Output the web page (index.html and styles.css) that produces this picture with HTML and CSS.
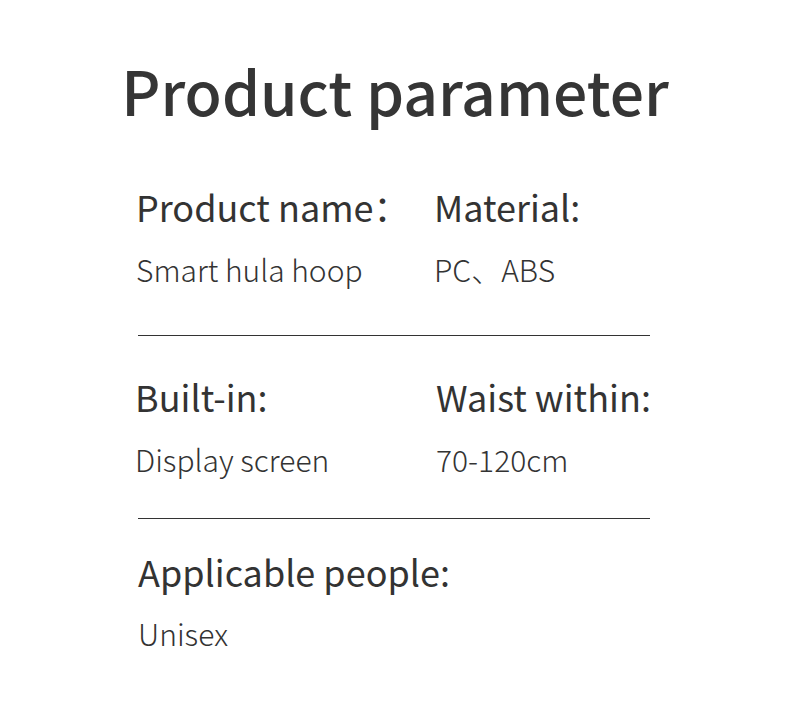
FILE: index.html
```html
<!DOCTYPE html>
<html>
<head>
<meta charset="utf-8">
<link rel="stylesheet" href="styles.css">
</head>
<body>
<main class="page">
  <h1 class="title">Product parameter</h1>
  <section class="specs">
    <div class="row row-1">
      <div class="cell cell-a1">
        <div class="label">Product name：</div>
        <div class="value">Smart hula hoop</div>
      </div>
      <div class="cell">
        <div class="label">Material:</div>
        <div class="value">PC、ABS</div>
      </div>
    </div>
    <hr class="rule">
    <div class="row row-2">
      <div class="cell cell-a2">
        <div class="label">Built-in:</div>
        <div class="value">Display screen</div>
      </div>
      <div class="cell cell-b2">
        <div class="label">Waist within:</div>
        <div class="value">70-120cm</div>
      </div>
    </div>
    <hr class="rule">
    <div class="row row-3">
      <div class="cell cell-wide">
        <div class="label">Applicable people:</div>
        <div class="value">Unisex</div>
      </div>
    </div>
  </section>
</main>
</body>
</html>
```
FILE: styles.css
```css
html, body {
  margin: 0;
  padding: 0;
  background: #ffffff;
}
body {
  font-family: "Noto Sans CJK SC", "Noto Sans", sans-serif;
  color: #333333;
  width: 790px;
  height: 707px;
  overflow: hidden;
}
.page {
  display: flex;
  flex-direction: column;
  align-items: center;
}
.title {
  margin: 60px 0 0 0;
  font-size: 60.6px;
  line-height: 60px;
  font-weight: 500;
  color: #353535;
  white-space: nowrap;
}
.specs {
  width: 512px;
  margin-top: 66px;
  margin-left: -2px;
}
.row {
  display: flex;
}
.cell {
  width: 298px;
  flex: none;
}
.cell-wide {
  width: auto;
  flex: 1;
  white-space: nowrap;
}
.label {
  font-size: 36px;
  line-height: 40px;
  font-weight: 400;
  white-space: nowrap;
}
.value {
  margin-top: 23px;
  font-size: 30px;
  line-height: 40px;
  font-weight: 300;
  white-space: nowrap;
}
.rule {
  margin: 0;
  border: 0;
  border-top: 1px solid #333333;
  height: 0;
}
.row-1 { padding-bottom: 46px; }
.row-2 { padding-top: 40px; padding-bottom: 39px; }
.row-3 { padding-top: 32px; }
.row-3 .value { margin-top: 22px; }
.cell-a1 { margin-left: -2px; }
.cell-a2 { margin-left: -3px; }
.cell-b2 { margin-left: 3px; }
```
